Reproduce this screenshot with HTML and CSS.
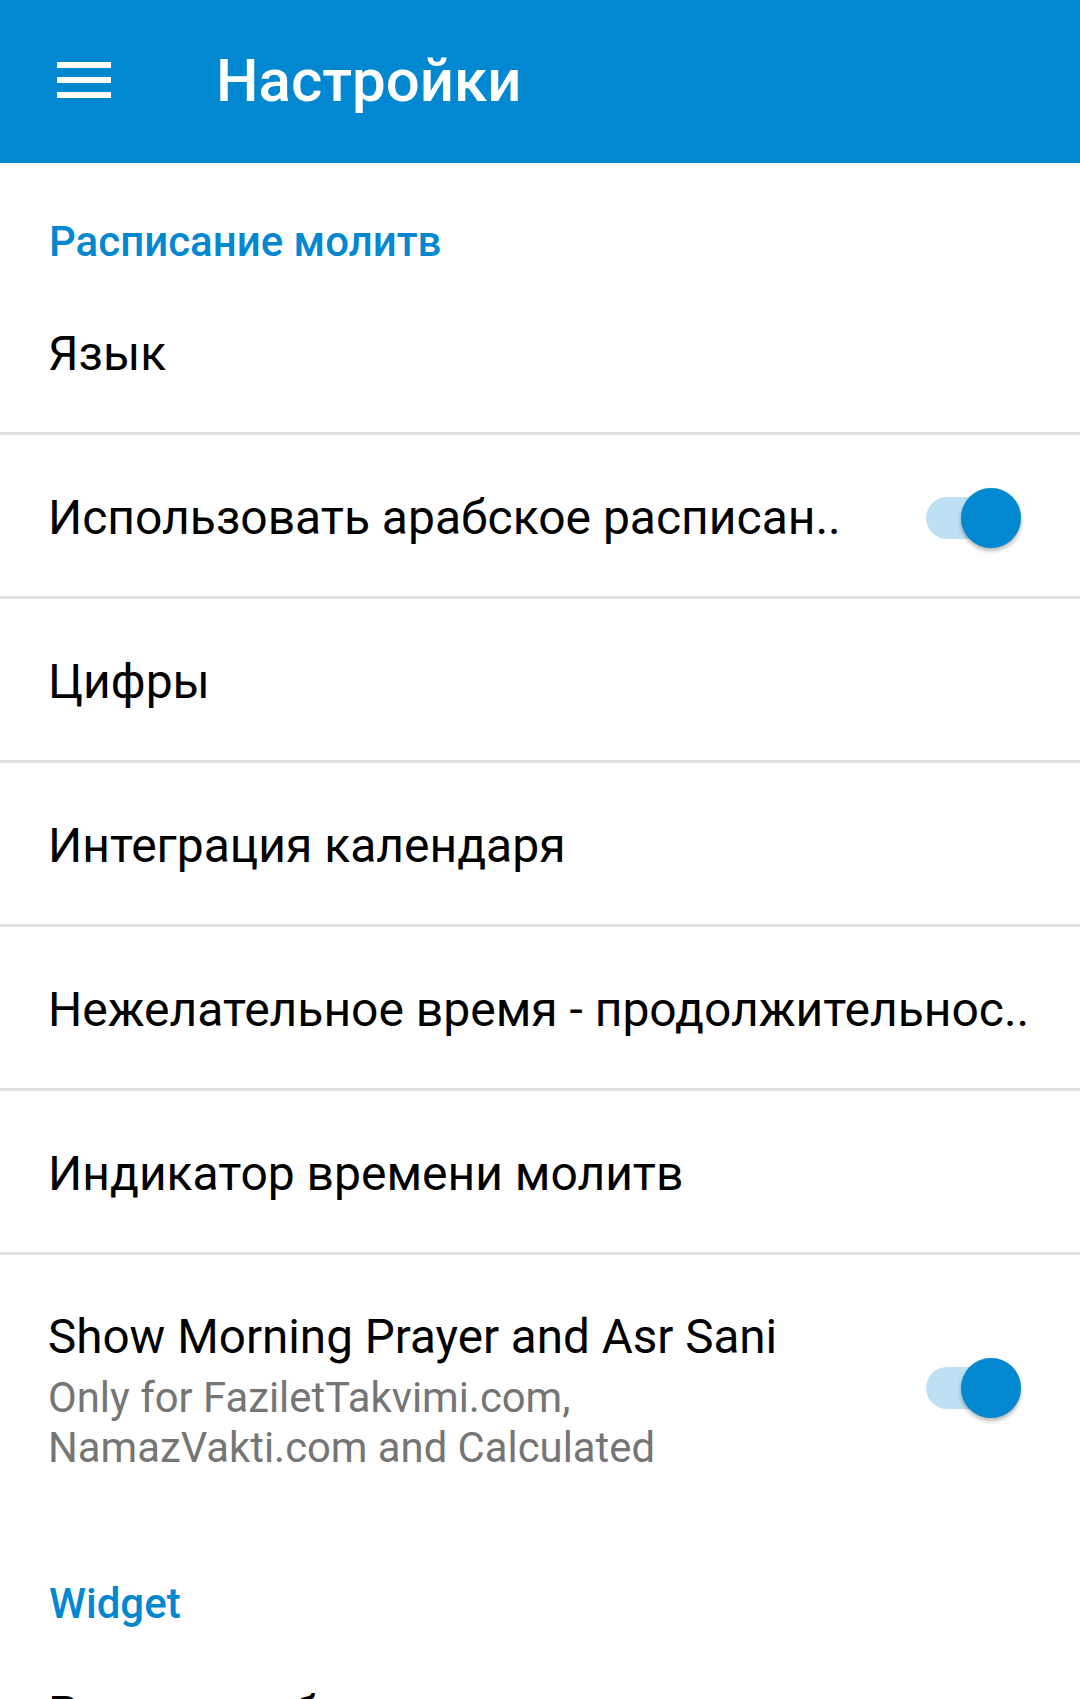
FILE: index.html
```html
<!DOCTYPE html>
<html lang="ru">
<head>
<meta charset="utf-8">
<title>Настройки</title>
<link rel="stylesheet" href="styles.css">
</head>
<body>
<div class="screen">
  <header class="toolbar">
    <div class="menu-icon" aria-label="menu">
      <span class="bar"></span>
      <span class="bar"></span>
      <span class="bar"></span>
    </div>
    <h1 class="toolbar-title">Настройки</h1>
  </header>

  <main class="prefs">
    <div class="category">Расписание молитв</div>

    <div class="pref">
      <div class="pref-text"><div class="pref-title">Язык</div></div>
    </div>
    <div class="pref">
      <div class="pref-text"><div class="pref-title">Использовать арабское расписан..</div></div>
      <div class="switch on"><span class="track"></span><span class="thumb"></span></div>
    </div>
    <div class="pref">
      <div class="pref-text"><div class="pref-title">Цифры</div></div>
    </div>
    <div class="pref">
      <div class="pref-text"><div class="pref-title">Интеграция календаря</div></div>
    </div>
    <div class="pref">
      <div class="pref-text"><div class="pref-title">Нежелательное время - продолжительнос..</div></div>
    </div>
    <div class="pref">
      <div class="pref-text"><div class="pref-title">Индикатор времени молитв</div></div>
    </div>
    <div class="pref tall last">
      <div class="pref-text">
        <div class="pref-title latin">Show Morning Prayer and Asr Sani</div>
        <div class="pref-summary">Only for FaziletTakvimi.com,<br>NamazVakti.com and Calculated</div>
      </div>
      <div class="switch on"><span class="track"></span><span class="thumb"></span></div>
    </div>

    <div class="category second">Widget</div>
    <div class="pref">
      <div class="pref-text"><div class="pref-title">Режим отображения виджета</div></div>
    </div>
  </main>
</div>
</body>
</html>
```

FILE: styles.css
```css
html, body {
  margin: 0;
  padding: 0;
  background: #ffffff;
}

body {
  font-family: Roboto, "Noto Sans", "Liberation Sans", sans-serif;
  width: 1080px;
  height: 1699px;
  overflow: hidden;
}

.screen {
  width: 1080px;
}

.toolbar {
  height: 163px;
  background: #0288D1;
  display: flex;
  align-items: center;
  box-sizing: border-box;
  padding-left: 57px;
}

.menu-icon {
  width: 54px;
  display: flex;
  flex-direction: column;
  gap: 9px;
  margin-top: -4px;
}

.menu-icon .bar {
  display: block;
  height: 6px;
  background: #ffffff;
}

.toolbar-title {
  margin: -2px 0 0 105px;
  font-size: 60px;
  font-weight: 500;
  line-height: 70px;
  color: #ffffff;
}

.prefs {
  display: flex;
  flex-direction: column;
}

.category {
  box-sizing: border-box;
  height: 108px;
  padding: 54px 0 0 49px;
  font-size: 42px;
  font-weight: 500;
  line-height: 49px;
  color: #0288D1;
}

.category.second {
  padding-top: 56px;
}

.pref {
  box-sizing: border-box;
  height: 164px;
  display: flex;
  align-items: center;
  padding: 4px 0 0 48px;
  border-bottom: 3px solid #e0e0e0;
}

.pref.last {
  border-bottom: none;
}

.pref.tall {
  height: 268px;
  padding-top: 4px;
}

.pref-text {
  flex: 1;
  min-width: 0;
}

.pref-title {
  font-size: 48px;
  line-height: 56px;
  color: #000000;
  white-space: nowrap;
}

.pref-title.latin {
  font-size: 47.6px;
}

.pref-summary {
  margin-top: 8px;
  font-size: 41.8px;
  line-height: 50px;
  color: #757575;
}

.switch {
  position: relative;
  width: 96px;
  height: 60px;
  margin-right: 58px;
  flex: none;
}

.pref.tall .switch {
  margin-top: -6px;
}

.switch .track {
  position: absolute;
  left: 0;
  top: 9px;
  width: 90px;
  height: 42px;
  border-radius: 21px;
  background: #BDE0F3;
}

.switch .thumb {
  position: absolute;
  left: 35px;
  top: 0;
  width: 60px;
  height: 60px;
  border-radius: 50%;
  background: #0288D1;
  box-shadow: 0 3px 4px rgba(0, 0, 0, 0.28), 0 0 1px rgba(0, 0, 0, 0.18);
}
```
